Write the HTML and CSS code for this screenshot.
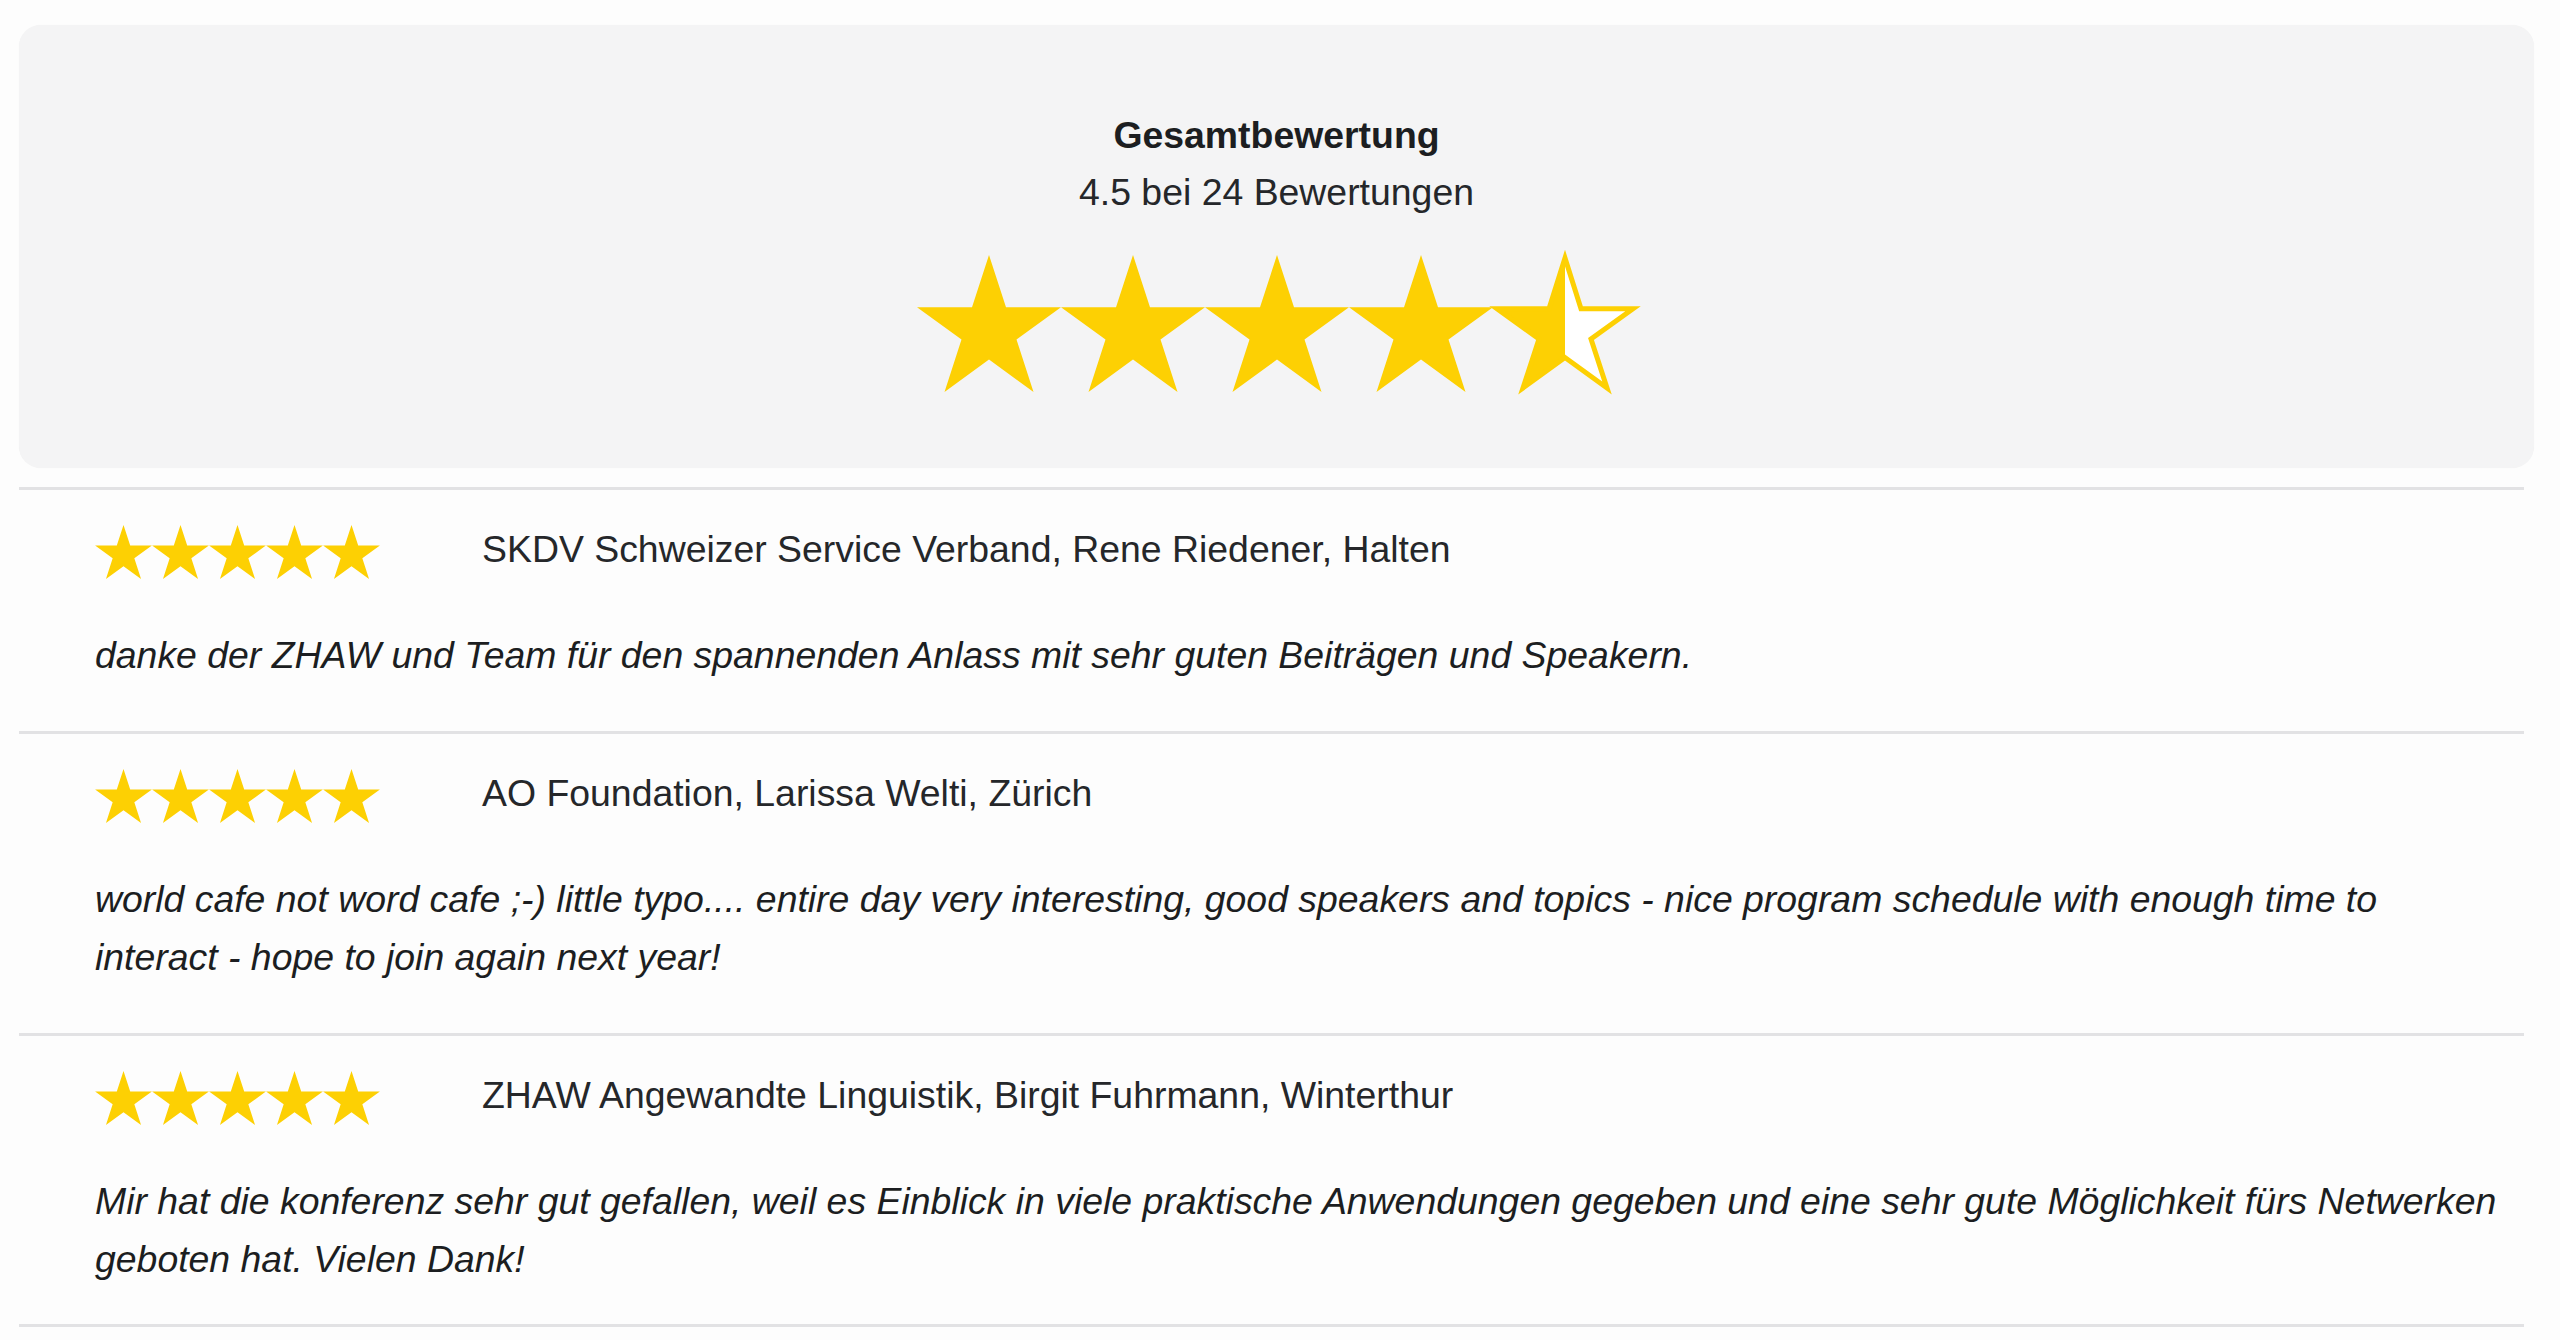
FILE: index.html
```html
<!DOCTYPE html>
<html lang="de">
<head>
<meta charset="utf-8">
<title>Bewertungen</title>
<link rel="stylesheet" href="styles.css">
</head>
<body>
<svg class="defs" width="0" height="0" aria-hidden="true">
  <defs>
    <linearGradient id="half" x1="0" x2="1" y1="0" y2="0">
      <stop offset="50%" stop-color="#fdd003"/>
      <stop offset="50%" stop-color="#ffffff"/>
    </linearGradient>
  </defs>
</svg>
<div class="page">
  <section class="summary">
    <h2 class="summary-title">Gesamtbewertung</h2>
    <p class="summary-sub">4.5 bei 24 Bewertungen</p>
    <div class="big-stars">
      <svg class="star big" viewBox="0 0 144 137"><polygon points="72,0 89,52.3 144,52.3 99.5,84.6 116.5,136.9 72,104.6 27.5,136.9 44.5,84.6 0,52.3 55,52.3"/></svg>
      <svg class="star big" viewBox="0 0 144 137"><polygon points="72,0 89,52.3 144,52.3 99.5,84.6 116.5,136.9 72,104.6 27.5,136.9 44.5,84.6 0,52.3 55,52.3"/></svg>
      <svg class="star big" viewBox="0 0 144 137"><polygon points="72,0 89,52.3 144,52.3 99.5,84.6 116.5,136.9 72,104.6 27.5,136.9 44.5,84.6 0,52.3 55,52.3"/></svg>
      <svg class="star big" viewBox="0 0 144 137"><polygon points="72,0 89,52.3 144,52.3 99.5,84.6 116.5,136.9 72,104.6 27.5,136.9 44.5,84.6 0,52.3 55,52.3"/></svg>
      <svg class="star big half" viewBox="0 0 144 137"><polygon points="72,3 88,53.8 140,53.8 98,84 114,133 72,102.5 30,133 46,84 4,53.8 56,53.8"/></svg>
    </div>
  </section>

  <div class="reviews">
    <article class="review">
      <div class="review-head">
        <div class="small-stars">
          <svg class="star small" viewBox="0 0 144 137"><polygon points="72,0 89,52.3 144,52.3 99.5,84.6 116.5,136.9 72,104.6 27.5,136.9 44.5,84.6 0,52.3 55,52.3"/></svg>
          <svg class="star small" viewBox="0 0 144 137"><polygon points="72,0 89,52.3 144,52.3 99.5,84.6 116.5,136.9 72,104.6 27.5,136.9 44.5,84.6 0,52.3 55,52.3"/></svg>
          <svg class="star small" viewBox="0 0 144 137"><polygon points="72,0 89,52.3 144,52.3 99.5,84.6 116.5,136.9 72,104.6 27.5,136.9 44.5,84.6 0,52.3 55,52.3"/></svg>
          <svg class="star small" viewBox="0 0 144 137"><polygon points="72,0 89,52.3 144,52.3 99.5,84.6 116.5,136.9 72,104.6 27.5,136.9 44.5,84.6 0,52.3 55,52.3"/></svg>
          <svg class="star small" viewBox="0 0 144 137"><polygon points="72,0 89,52.3 144,52.3 99.5,84.6 116.5,136.9 72,104.6 27.5,136.9 44.5,84.6 0,52.3 55,52.3"/></svg>
        </div>
        <span class="review-name">SKDV Schweizer Service Verband, Rene Riedener, Halten</span>
      </div>
      <p class="review-text">danke der ZHAW und Team für den spannenden Anlass mit sehr guten Beiträgen und Speakern.</p>
    </article>

    <article class="review">
      <div class="review-head">
        <div class="small-stars">
          <svg class="star small" viewBox="0 0 144 137"><polygon points="72,0 89,52.3 144,52.3 99.5,84.6 116.5,136.9 72,104.6 27.5,136.9 44.5,84.6 0,52.3 55,52.3"/></svg>
          <svg class="star small" viewBox="0 0 144 137"><polygon points="72,0 89,52.3 144,52.3 99.5,84.6 116.5,136.9 72,104.6 27.5,136.9 44.5,84.6 0,52.3 55,52.3"/></svg>
          <svg class="star small" viewBox="0 0 144 137"><polygon points="72,0 89,52.3 144,52.3 99.5,84.6 116.5,136.9 72,104.6 27.5,136.9 44.5,84.6 0,52.3 55,52.3"/></svg>
          <svg class="star small" viewBox="0 0 144 137"><polygon points="72,0 89,52.3 144,52.3 99.5,84.6 116.5,136.9 72,104.6 27.5,136.9 44.5,84.6 0,52.3 55,52.3"/></svg>
          <svg class="star small" viewBox="0 0 144 137"><polygon points="72,0 89,52.3 144,52.3 99.5,84.6 116.5,136.9 72,104.6 27.5,136.9 44.5,84.6 0,52.3 55,52.3"/></svg>
        </div>
        <span class="review-name">AO Foundation, Larissa Welti, Zürich</span>
      </div>
      <p class="review-text">world cafe not word cafe ;-) little typo.... entire day very interesting, good speakers and topics - nice program schedule with enough time to interact - hope to join again next year!</p>
    </article>

    <article class="review">
      <div class="review-head">
        <div class="small-stars">
          <svg class="star small" viewBox="0 0 144 137"><polygon points="72,0 89,52.3 144,52.3 99.5,84.6 116.5,136.9 72,104.6 27.5,136.9 44.5,84.6 0,52.3 55,52.3"/></svg>
          <svg class="star small" viewBox="0 0 144 137"><polygon points="72,0 89,52.3 144,52.3 99.5,84.6 116.5,136.9 72,104.6 27.5,136.9 44.5,84.6 0,52.3 55,52.3"/></svg>
          <svg class="star small" viewBox="0 0 144 137"><polygon points="72,0 89,52.3 144,52.3 99.5,84.6 116.5,136.9 72,104.6 27.5,136.9 44.5,84.6 0,52.3 55,52.3"/></svg>
          <svg class="star small" viewBox="0 0 144 137"><polygon points="72,0 89,52.3 144,52.3 99.5,84.6 116.5,136.9 72,104.6 27.5,136.9 44.5,84.6 0,52.3 55,52.3"/></svg>
          <svg class="star small" viewBox="0 0 144 137"><polygon points="72,0 89,52.3 144,52.3 99.5,84.6 116.5,136.9 72,104.6 27.5,136.9 44.5,84.6 0,52.3 55,52.3"/></svg>
        </div>
        <span class="review-name">ZHAW Angewandte Linguistik, Birgit Fuhrmann, Winterthur</span>
      </div>
      <p class="review-text">Mir hat die konferenz sehr gut gefallen, weil es Einblick in viele praktische Anwendungen gegeben und eine sehr gute Möglichkeit fürs Netwerken geboten hat. Vielen Dank!</p>
    </article>
  </div>
</div>
</body>
</html>
```

FILE: styles.css
```css
html, body {
  margin: 0;
  padding: 0;
}

body {
  background: #fdfdfd;
  font-family: "Liberation Sans", Arial, sans-serif;
  color: #222;
  overflow: hidden;
}

.defs {
  position: absolute;
  width: 0;
  height: 0;
}

.page {
  padding: 25px 26px 0 19px;
}

.summary {
  background: #f4f4f5;
  border-radius: 22px;
  padding: 88px 0 76px;
  text-align: center;
  box-shadow: 0 0 1px rgba(0, 0, 0, 0.06);
}

.summary-title {
  margin: 0;
  font-size: 37.4px;
  line-height: 44px;
  font-weight: bold;
  color: #1c1e21;
}

.summary-sub {
  margin: 13px 0 0;
  font-size: 37.4px;
  line-height: 44px;
  color: #25272a;
}

.big-stars {
  margin-top: 41px;
  display: flex;
  justify-content: center;
  padding-left: 1px;
}

.star {
  display: block;
  overflow: visible;
}

.star polygon {
  fill: #fdd003;
}

.star.big {
  width: 144px;
  height: 137px;
}

.star.half polygon {
  fill: url(#half);
  stroke: #fdd003;
  stroke-width: 5px;
  stroke-linejoin: miter;
}

.reviews {
  margin-top: 19px;
  margin-right: 10px;
}

.review {
  border-top: 3px solid #e2e2e4;
  padding: 35px 19px 47px 76px;
}

.review:last-child {
  border-bottom: 3px solid #e2e2e4;
  padding-bottom: 36px;
}

.review-head {
  display: flex;
  align-items: center;
}

.small-stars {
  display: flex;
  width: 387px;
}

.star.small {
  width: 57px;
  height: 54px;
}

.review-name {
  font-size: 37.4px;
  line-height: 44px;
  color: #25272a;
  margin-top: -6px;
}

.review-text {
  margin: 47px 0 0;
  font-size: 37.4px;
  line-height: 58px;
  font-style: italic;
  color: #1c1e21;
}
```
